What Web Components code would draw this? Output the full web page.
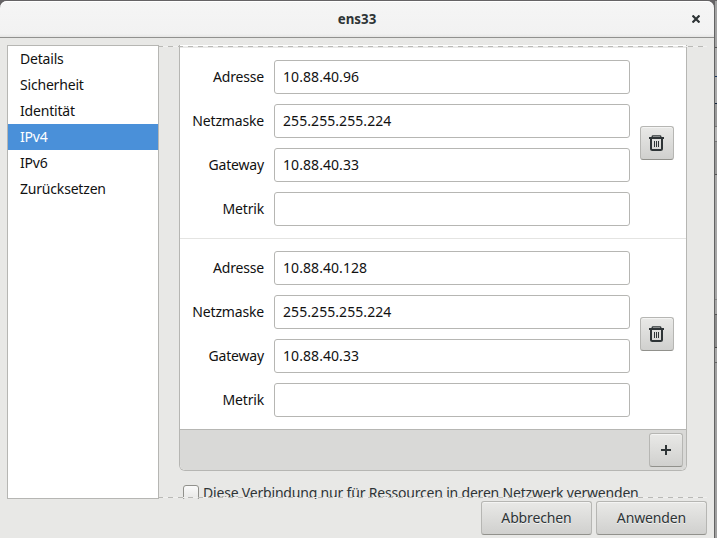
<!DOCTYPE html>
<html lang="de">
<head>
<meta charset="utf-8">
<title>ens33</title>
<style>
html,body{margin:0;width:717px;height:538px;overflow:hidden;background:#a9a9a9;font:14px/20px "Noto Sans","Open Sans",sans-serif;color:#111}
body{display:flex}
</style>
</head>
<body>
<network-dialog></network-dialog><desktop-edge></desktop-edge>
<script>
const define=(name,html,setup)=>customElements.define(name,class extends HTMLElement{
  constructor(){super();this.attachShadow({mode:'open'});}
  connectedCallback(){if(this.shadowRoot.childNodes.length)return;this.shadowRoot.innerHTML=html;if(setup)setup(this,this.shadowRoot);}
});

define('desktop-edge',`<style>
:host{display:block;flex:none;width:3px;height:538px;box-sizing:border-box;border-top:1px solid #656365;border-left:1px solid #636363;
background:linear-gradient(#a3a3a3 46px,#555 46px 47px,#aaa 47px 75px,#17365f 75px 76px,#aaa 76px 102px,#10233c 102px 103px,#999 103px 125px,#777 125px 126px,#b3b3b3 126px 140px,#777 140px 141px,#999 141px 173px,#555 173px 174px,#a6a6a6 174px 298px,#858585 298px 299px,#a5a5a5 299px 313px,#555 313px 314px,#8b8b8b 314px 346px,#444 346px 347px,#a5a5a5 347px 361px,#666 361px 362px,#a0a0a0 362px)}
</style>`);

define('gtk-button',`<style>
:host{display:flex;align-items:center;justify-content:center;box-sizing:border-box;width:34px;height:34px;flex:none;border:1px solid #b6b6b3;border-bottom-color:#91918c;border-radius:3px;background:linear-gradient(#e9e9e7,#d0d0ce);box-shadow:inset 0 1px #f4f4f3;color:#2e3436;text-shadow:0 1px #f3f3f2;letter-spacing:-.13px}
</style><slot></slot>`);

define('trash-icon',`<style>:host{display:block;width:16px;height:16px}svg{display:block}</style>
<svg width="16" height="16" viewBox="0 0 16 16" fill="none" stroke="#2e3436"><path d="M0 3h15" stroke-width="2"/><path d="M3.2 2.5V1.5Q3.2.8 4 .8h7q.8 0 .8.7v1" stroke-width="1.3"/><path d="M2 4v9.5Q2 15 3.5 15h8q1.5 0 1.5-1.5V4" stroke-width="2"/><path d="M5.5 6v6M7.5 6v6M9.5 6v6" stroke-width="1"/></svg>`);

define('plus-icon',`<style>:host{display:block;width:12px;height:12px}svg{display:block}</style>
<svg width="12" height="12" viewBox="0 0 12 12" stroke="#2e3436" stroke-width="2"><path d="M1 6h10M6 1v10"/></svg>`);

define('title-bar',`<style>
:host{display:grid;grid-template-columns:1fr auto 1fr;align-items:center;height:37px;box-sizing:border-box;background:linear-gradient(#f5f5f5,#f2f2f2 33px,#e5e5e4);border-bottom:1px solid #91918f;border-radius:7px 7px 0 0;box-shadow:inset 0 1px #fff;color:#2e3436;font-weight:700;font-size:13.3px}
svg{justify-self:end;margin-right:14px}
</style><span></span><slot></slot><svg width="8" height="8" viewBox="0 0 8 8" stroke="#2e3436" stroke-width="2.2"><path d="M.5.5l7 7M7.5.5l-7 7"/></svg>`);

define('nav-item',`<style>
:host{display:block;height:26px;line-height:26px;padding-left:12px;color:#111;letter-spacing:-.19px}
:host([selected]){background:#4a90d9;color:#fff}
</style><slot></slot>`);

define('nav-list',`<style>
:host{display:block;box-sizing:border-box;width:152px;height:454px;border:1px solid #b6b6b3;background:#fff;flex:none}
</style><slot></slot>`);

define('entry-row',`<style>
:host{display:flex;align-items:center;height:34px;gap:10px}
label{width:84px;text-align:right;white-space:nowrap;letter-spacing:-.17px}
.field{box-sizing:border-box;width:356px;height:34px;border:1px solid #b6b6b3;border-radius:3px;background:#fff;line-height:32px;padding-left:8px;letter-spacing:.07px}
</style><label></label><div class="field"><slot></slot></div>`,(h,r)=>{
  const l=r.querySelector('label');l.textContent=h.getAttribute('label');
});

define('address-card',`<style>
:host{display:flex;align-items:center;gap:10px;box-sizing:border-box;padding:12px 0 12px}
.rows{display:grid;gap:10px}
</style><div class="rows"><slot></slot></div><gtk-button><trash-icon></trash-icon></gtk-button>`);

define('address-list',`<style>
:host{display:block;box-sizing:border-box;width:508px;height:426px;border:1px solid #b6b6b3;border-top:0;border-radius:0 0 6px 6px;background:#fff;overflow:hidden}
.body{box-sizing:border-box;height:384px;padding-top:3px}
::slotted(address-card:not(:first-child)){border-top:1px solid #e4e4e2}
.bar{display:flex;justify-content:flex-end;align-items:center;box-sizing:border-box;height:41px;padding-right:3px;border-top:1px solid #b6b6b3;background:#d9d9d7}
</style><div class="body"><slot></slot></div><div class="bar"><gtk-button><plus-icon></plus-icon></gtk-button></div>`);

define('check-option',`<style>
:host{display:flex;align-items:flex-start;gap:4px;padding:14px 0 0 4px;color:#2e3436;white-space:nowrap}
i{box-sizing:border-box;width:16px;height:16px;border:1px solid #91918c;border-radius:3px;background:linear-gradient(#fafafa,#e6e6e4)}
span{margin-top:-2px;letter-spacing:-.19px}
</style><i></i><span><slot></slot></span>`);

define('scroll-view',`<style>
:host{display:block;position:relative;box-sizing:border-box;width:548px;height:454px;padding-left:20px;overflow:hidden}
.cue{position:absolute;left:0;right:0;height:1px;background:repeating-linear-gradient(90deg,#b9b9b6 0 5px,#f0f0ef 5px 10px) -1px 0/560px 1px}
.top{top:1px}.shade{position:absolute;top:2px;left:21px;width:506px;height:1px;background:#e8e8e7}.bottom{bottom:1px}
</style><slot></slot><div class="shade"></div><div class="cue top"></div><div class="cue bottom"></div>`);

define('network-dialog',`<style>
:host{display:block;width:714px;height:538px;flex:none;box-sizing:border-box;border-top:1px solid #656365;background:linear-gradient(#656365 12px,#e8e8e6 12px)}
main{display:flex;padding:7px 7px 0;background:#e8e8e6}
footer{display:flex;justify-content:flex-end;gap:4px;padding:2px 7px 0 0;background:#e8e8e6}
footer gtk-button{width:111px}
</style>
<title-bar>ens33</title-bar>
<main>
<nav-list><nav-item>Details</nav-item><nav-item>Sicherheit</nav-item><nav-item>Identität</nav-item><nav-item selected>IPv4</nav-item><nav-item>IPv6</nav-item><nav-item>Zurücksetzen</nav-item></nav-list>
<scroll-view>
<address-list>
<address-card><entry-row label="Adresse">10.88.40.96</entry-row><entry-row label="Netzmaske">255.255.255.224</entry-row><entry-row label="Gateway">10.88.40.33</entry-row><entry-row label="Metrik"></entry-row></address-card>
<address-card><entry-row label="Adresse">10.88.40.128</entry-row><entry-row label="Netzmaske">255.255.255.224</entry-row><entry-row label="Gateway">10.88.40.33</entry-row><entry-row label="Metrik"></entry-row></address-card>
</address-list>
<check-option>Diese Verbindung nur für Ressourcen in deren Netzwerk verwenden</check-option>
</scroll-view>
</main>
<footer><gtk-button>Abbrechen</gtk-button><gtk-button>Anwenden</gtk-button></footer>`);
</script>
</body>
</html>
